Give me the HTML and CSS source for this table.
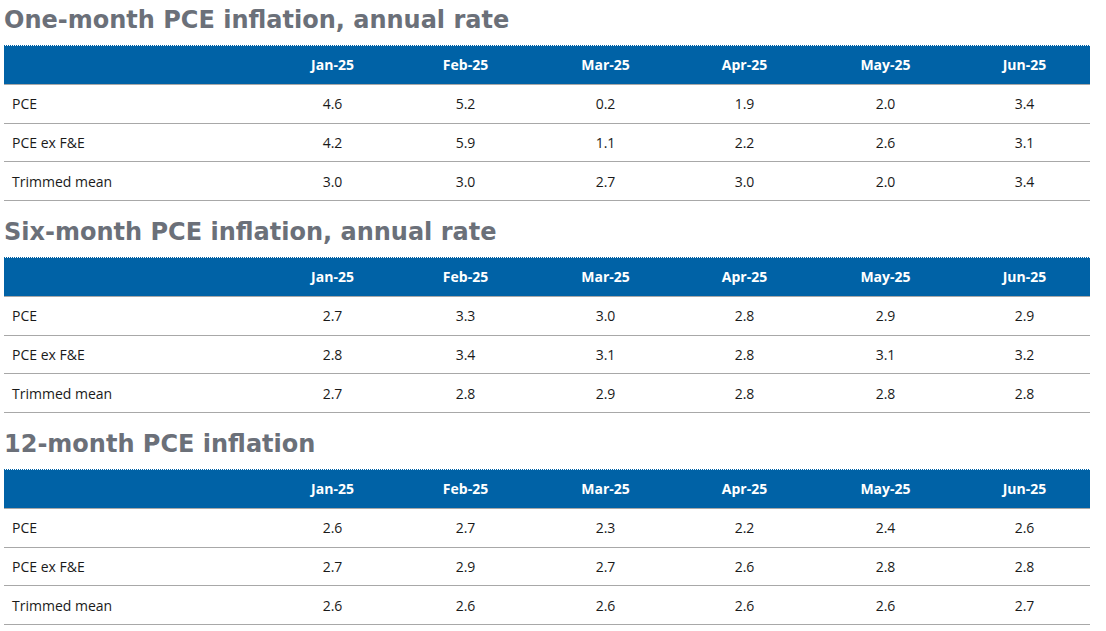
FILE: index.html
```html
<!DOCTYPE html>
<html lang="en">
<head>
<meta charset="utf-8">
<title>PCE inflation</title>
<link rel="stylesheet" href="styles.css">
</head>
<body>
<main class="page">
  <section class="block">
    <h2 class="title">One-month PCE inflation, annual rate</h2>
    <div class="table">
      <div class="row head"><div class="label"></div><div class="cell">Jan-25</div><div class="cell">Feb-25</div><div class="cell">Mar-25</div><div class="cell">Apr-25</div><div class="cell">May-25</div><div class="cell">Jun-25</div></div>
      <div class="row"><div class="label">PCE</div><div class="cell">4.6</div><div class="cell">5.2</div><div class="cell">0.2</div><div class="cell">1.9</div><div class="cell">2.0</div><div class="cell">3.4</div></div>
      <div class="row"><div class="label">PCE ex F&amp;E</div><div class="cell">4.2</div><div class="cell">5.9</div><div class="cell">1.1</div><div class="cell">2.2</div><div class="cell">2.6</div><div class="cell">3.1</div></div>
      <div class="row"><div class="label">Trimmed mean</div><div class="cell">3.0</div><div class="cell">3.0</div><div class="cell">2.7</div><div class="cell">3.0</div><div class="cell">2.0</div><div class="cell">3.4</div></div>
    </div>
  </section>
  <section class="block">
    <h2 class="title">Six-month PCE inflation, annual rate</h2>
    <div class="table">
      <div class="row head"><div class="label"></div><div class="cell">Jan-25</div><div class="cell">Feb-25</div><div class="cell">Mar-25</div><div class="cell">Apr-25</div><div class="cell">May-25</div><div class="cell">Jun-25</div></div>
      <div class="row"><div class="label">PCE</div><div class="cell">2.7</div><div class="cell">3.3</div><div class="cell">3.0</div><div class="cell">2.8</div><div class="cell">2.9</div><div class="cell">2.9</div></div>
      <div class="row"><div class="label">PCE ex F&amp;E</div><div class="cell">2.8</div><div class="cell">3.4</div><div class="cell">3.1</div><div class="cell">2.8</div><div class="cell">3.1</div><div class="cell">3.2</div></div>
      <div class="row"><div class="label">Trimmed mean</div><div class="cell">2.7</div><div class="cell">2.8</div><div class="cell">2.9</div><div class="cell">2.8</div><div class="cell">2.8</div><div class="cell">2.8</div></div>
    </div>
  </section>
  <section class="block">
    <h2 class="title">12-month PCE inflation</h2>
    <div class="table">
      <div class="row head"><div class="label"></div><div class="cell">Jan-25</div><div class="cell">Feb-25</div><div class="cell">Mar-25</div><div class="cell">Apr-25</div><div class="cell">May-25</div><div class="cell">Jun-25</div></div>
      <div class="row"><div class="label">PCE</div><div class="cell">2.6</div><div class="cell">2.7</div><div class="cell">2.3</div><div class="cell">2.2</div><div class="cell">2.4</div><div class="cell">2.6</div></div>
      <div class="row"><div class="label">PCE ex F&amp;E</div><div class="cell">2.7</div><div class="cell">2.9</div><div class="cell">2.7</div><div class="cell">2.6</div><div class="cell">2.8</div><div class="cell">2.8</div></div>
      <div class="row"><div class="label">Trimmed mean</div><div class="cell">2.6</div><div class="cell">2.6</div><div class="cell">2.6</div><div class="cell">2.6</div><div class="cell">2.6</div><div class="cell">2.7</div></div>
    </div>
  </section>
</main>
</body>
</html>
```
FILE: styles.css
```css
html, body {
  margin: 0;
  padding: 0;
  background: #ffffff;
}

.page {
  width: 1086px;
  padding: 0 4px;
  font-family: "Open Sans", "Liberation Sans", sans-serif;
  color: #1a1a1a;
}

.block + .block {
  margin-top: 11px;
}

.title {
  margin: 0;
  height: 45px;
  line-height: 40px;
  font-family: "DejaVu Sans", "Open Sans", sans-serif;
  font-weight: 700;
  font-size: 24px;
  color: #6b7079;
  white-space: nowrap;
}

.table {
  display: flex;
  flex-direction: column;
}

.row {
  display: grid;
  grid-template-columns: 264px 129px 137px 143px 135px 147px 131px;
  align-items: center;
  height: 38.67px;
  box-sizing: border-box;
  border-bottom: 1px solid #a8a8a8;
  font-size: 14px;
}

.row.head {
  height: 40px;
  background-color: #0062a6;
  background-image: repeating-linear-gradient(90deg, #0062a6 0 1px, #ffffff 1px 2px);
  background-size: 100% 1px;
  background-repeat: no-repeat;
  color: #ffffff;
  font-weight: 700;
}

.label {
  padding-left: 8px;
}

.cell {
  text-align: center;
}
```
